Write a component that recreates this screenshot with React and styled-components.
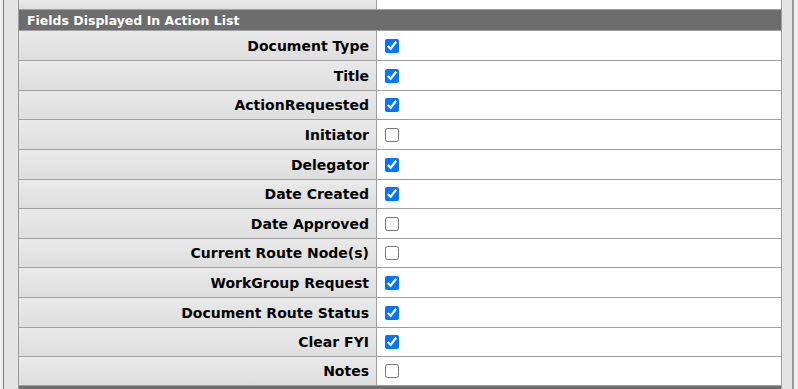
import React from "react";
import styled, { createGlobalStyle } from "styled-components";

const GlobalStyle = createGlobalStyle`
  html, body { margin: 0; padding: 0; background: #f0f0f0; }
  body { font-family: "DejaVu Sans", Verdana, sans-serif; }
`;

const Page = styled.div`
  width: 798px;
  height: 389px;
  overflow: hidden;
  padding-left: 3px;
  box-sizing: border-box;
`;

const Frame = styled.div`
  width: 791px;
  height: 389px;
  box-sizing: border-box;
  background: #e4e4e4;
  border-left: 1px solid #7a7a7a;
  border-right: 2px solid #9a9a9a;
  padding: 0 10px 0 14px;
`;

const Table = styled.div`
  display: flex;
  flex-direction: column;
  border-left: 1px solid #9c9c9c;
  border-right: 1px solid #9c9c9c;
  background: #ffffff;
`;

const Row = styled.div`
  display: grid;
  grid-template-columns: 358px 1fr;
  height: ${(p) => p.$h}px;
  border-bottom: 1px solid #a0a0a0;
  box-sizing: content-box;
`;

const Label = styled.div`
  background: linear-gradient(to bottom, #e9e9e9, #dedede);
  border-right: 1px solid #a0a0a0;
  display: flex;
  align-items: center;
  justify-content: flex-end;
  padding-right: 7px;
  font-size: 14px;
  font-weight: bold;
  color: #000;
  white-space: nowrap;
`;

const Value = styled.div`
  display: flex;
  align-items: center;
  padding-left: 5px;
  background: #fff;
`;

const Check = styled.input`
  width: 14px;
  height: 14px;
  margin: 0 0 0 3px;
`;

const Header = styled.div`
  height: 20px;
  background: #6d6d6d;
  color: #fff;
  font-size: 12.5px;
  font-weight: bold;
  display: flex;
  align-items: center;
  padding-left: 8px;
  border-bottom: 1px solid #a0a0a0;
`;

const NextHeader = styled.div`
  height: 10px;
  background: #6d6d6d;
`;

const fields = [
  ["Document Type", true],
  ["Title", true],
  ["ActionRequested", true],
  ["Initiator", false],
  ["Delegator", true],
  ["Date Created", true],
  ["Date Approved", false],
  ["Current Route Node(s)", false],
  ["WorkGroup Request", true],
  ["Document Route Status", true],
  ["Clear FYI", true],
  ["Notes", false],
];

const heights = [29, 29, 28, 29, 29, 28, 29, 28, 29, 29, 28, 28];

export default function App() {
  return (
    <Page>
      <GlobalStyle />
      <Frame>
        <Table>
          <Row $h={9}>
            <Label />
            <Value />
          </Row>
          <Header>Fields Displayed In Action List</Header>
          {fields.map(([name, checked], i) => (
            <Row key={name} $h={heights[i]}>
              <Label>{name}</Label>
              <Value>
                <Check type="checkbox" defaultChecked={checked} />
              </Value>
            </Row>
          ))}
          <NextHeader />
        </Table>
      </Frame>
    </Page>
  );
}
